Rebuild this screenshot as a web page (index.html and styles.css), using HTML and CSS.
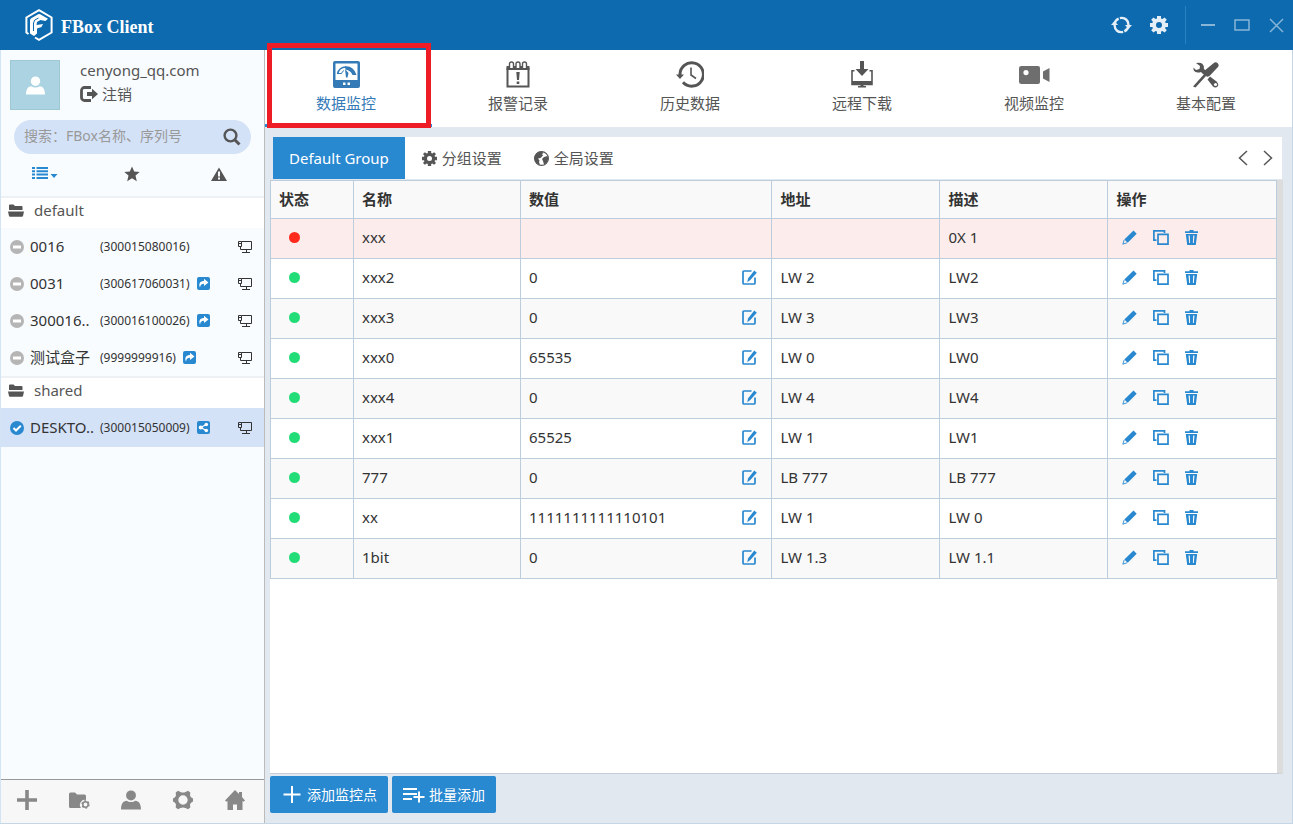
FILE: index.html
```
<!DOCTYPE html>
<html lang="zh">
<head>
    <meta charset="utf-8">
    <title>FBox Client</title>
    <link rel="stylesheet" href="styles.css">
</head>
<body>
    <svg class="sprite" aria-hidden="true">
        <symbol id="user" viewBox="0 0 20 20"><ellipse cx="10" cy="5.4" rx="4.9" ry="5"/><path d="M0 19.500c0-5.500 2.200-8.600 5.600-8.700 2.500 1.700 6.300 1.700 8.800 0 3.400.1 5.600 3.200 5.600 8.700z"/></symbol>
        <symbol id="logout" viewBox="0 0 18 16"><path d="M11 1.500H4.500a3 3 0 0 0-3 3v7a3 3 0 0 0 3 3H11" fill="none" stroke="currentColor" stroke-width="2.800"/><path d="M7 6h5V2.800L18 8l-6 5.200V10H7z"/></symbol>
        <symbol id="search" viewBox="0 0 18 18"><circle cx="7.500" cy="7.500" r="5.900" fill="none" stroke="currentColor" stroke-width="2.400"/><path d="M11.500 11.500l5 5" stroke="currentColor" stroke-width="3"/></symbol>
        <symbol id="list" viewBox="0 0 26 13"><path d="M0 0h3v2H0zM4.500 0H16v2H4.500zM0 3.300h3v2H0zM4.500 3.300H16v2H4.500zM0 6.600h3v2H0zM4.500 6.600H16v2H4.500zM0 9.900h3v2H0zM4.500 9.900H16v2H4.500zM18.500 7h7L22 11z"/></symbol>
        <symbol id="star" viewBox="0 0 16 16"><path d="M8 .5l2.200 5 5.500.5-4.200 3.600 1.300 5.600L8 12.300l-4.800 2.900 1.300-5.600L.3 6l5.500-.5z"/></symbol>
        <symbol id="warning" viewBox="0 0 16 14"><path fill-rule="evenodd" d="M8 .5L16 14H0zM7 4.500v5h2v-5zM7 10.500v2h2v-2z"/></symbol>
        <symbol id="folder-open" viewBox="0 0 16 13"><path d="M1 6V1.500Q1 .5 2 .5h3.500L7 2h6.500q1 0 1 1v3zM0 7.500h16l-1 4.500q-.2.800-1 .8H2q-.8 0-1-.8z"/></symbol>
        <symbol id="minus-circle" viewBox="0 0 14 14"><circle cx="7" cy="7" r="7"/><path d="M3 5.500h8v3H3z" fill="#fff"/></symbol>
        <symbol id="check-circle" viewBox="0 0 14 14"><circle cx="7" cy="7" r="7"/><path d="M3.500 7l2.500 2.500 4.800-4.800" stroke="#fff" stroke-width="2" fill="none"/></symbol>
        <symbol id="forward" viewBox="0 0 13 13"><rect width="13" height="13" rx="2"/><path d="M3 10.500C1 6 4 4 7 4V1.800L11.500 5.500 7 9V6.800C5 6.800 3.500 7.500 3 10.500z" fill="#fff"/></symbol>
        <symbol id="share" viewBox="0 0 13 13"><rect width="13" height="13" rx="2"/><g fill="#fff"><circle cx="3.700" cy="6.500" r="2"/><circle cx="9.300" cy="3.500" r="1.800"/><circle cx="9.300" cy="9.500" r="1.800"/></g><path d="M9.300 3.500L3.700 6.500l5.600 3" stroke="#fff" fill="none" stroke-width="1.200"/></symbol>
        <symbol id="monitor" viewBox="0 0 14 12"><path d="M3.500.5h10v8H3M.5.500h3v5h-3zM1 2.500h2M2.500 5.500v3h1M8.500 8.500v3M4 11.500h8" fill="none" stroke="currentColor"/></symbol>
        <symbol id="plus-bold" viewBox="0 0 20 20"><path d="M10 0v20M0 10h20" stroke="currentColor" stroke-width="3.600"/></symbol>
        <symbol id="folder-gear" viewBox="0 0 21 17"><path d="M0 2q0-1.500 1.500-1.500H6L8 2.500h7.500q1.500 0 1.500 1.500v4a5 5 0 0 0-5 8H1.500Q0 16 0 14.500z"/><circle cx="16.500" cy="12.500" r="2.700" fill="none" stroke="currentColor" stroke-width="1.500"/><circle cx="16.500" cy="12.500" r="3.600" fill="none" stroke="currentColor" stroke-width="1.200" stroke-dasharray="1.900"/></symbol>
        <symbol id="gear-ring" viewBox="0 0 20 20"><path fill-rule="evenodd" d="M5 .8L7.500 2Q10 3 12.500 2L15 .8l2.300 1.800-.3 3Q17.500 7.500 20 8.500v3q-2.500 1-3 2.900l.3 3-2.300 1.800-2.500-1.200q-2.500-1-5 0L5 19.200l-2.300-1.800.3-3Q2.500 12.500 0 11.500v-3Q2.500 7.500 3 5.600l-.3-3zM10 5.300a4.700 4.700 0 1 0 0 9.400 4.700 4.700 0 0 0 0-9.400z"/></symbol>
        <symbol id="home" viewBox="0 0 20 20"><path d="M10 0l4 4V2h3v5l3 3.500-1.500 1.200L17.500 11v9H12v-5.500H8V20H2.500v-9l-1 .7L0 10.500z"/></symbol>
        <symbol id="gauge" viewBox="0 0 27 27"><path fill-rule="evenodd" d="M2 0h23q2 0 2 2v23q0 2-2 2H2q-2 0-2-2V2Q0 0 2 0zM2.500 2.500V19h22V2.500zM10 21.500v2.500h2.500v-2.500zM14.500 21.500v2.500H17v-2.500z"/><path d="M4.500 13C5.500 8.500 9 6 13 6" fill="none" stroke="currentColor" stroke-width="1.500"/><path d="M4.500 12.500h4Q9 10.500 11 9.500" fill="none" stroke="currentColor"/><path d="M12 5.300q8.500-.8 11.500 8.700h-4Q18 9.500 12.500 8.500z"/><path d="M12 8l3.500 4-1 4.500H13z"/></symbol>
        <symbol id="alarm" viewBox="0 0 24 27"><path d="M1.500 7v18.500h21V7" fill="none" stroke="currentColor" stroke-width="2"/><path d="M.5 5h23v4H.5zM10.300 11h3.400l-.7 8h-2zM10.700 20.500h2.600V23h-2.600z"/><path d="M3.500 7V3q0-2 2-2t2 2v4M10 7V3q0-2 2-2t2 2v4M16.500 7V3q0-2 2-2t2 2v4" fill="#fff" stroke="currentColor" stroke-width="1.400"/></symbol>
        <symbol id="history" viewBox="0 0 28 27"><path d="M4 14A11.700 11.700 0 1 1 7 21.300" fill="none" stroke="currentColor" stroke-width="3"/><path d="M0 13.500h8L4 18z"/><path d="M15 6.500V14l5 3.500" fill="none" stroke="currentColor" stroke-width="1.600"/></symbol>
        <symbol id="download" viewBox="0 0 22 27"><path d="M3.500 9.800H1V23.500h20V9.800h-2.500" fill="none" stroke="currentColor" stroke-width="1.600"/><path d="M1 20h20v4H1zM9.500 24h3v1H15v1.500H7V25h2.500zM9 0h4v8h4.500L11 15 4.500 8H9z"/></symbol>
        <symbol id="camera" viewBox="0 0 31 18"><path fill-rule="evenodd" d="M2.500 0H19q2 0 2 2v14q0 2-2 2H2.500Q0 18 0 16V2Q0 0 2.500 0zM7 4a2.600 2.600 0 1 0 0 5.200A2.600 2.600 0 0 0 7 4zM30.500 2v14L24 12.500v-7z"/></symbol>
        <symbol id="tools" viewBox="0 0 26 26"><path d="M3 1l4 3-.5 3L3 8 .5 5.500Q0 10 4.500 10.500q2 .2 3.500-.5l2.500 2.500 3-3L11 7q.5-3-1.500-5T3 1z"/><path d="M24.700 1.200q2 2-.2 4.300l-7.500 8q-2 2-4 .5L2.500 25.500 0 24.500l11-12.300q-1-2 1-4l8.500-7q2.200-2 4.200 0z"/><path d="M17 14.500l6.500 5q3 3 1 5t-4.500 0l-5.500-7z"/><circle cx="22.500" cy="22.500" r="1.600" fill="#fff"/></symbol>
        <symbol id="cog" viewBox="0 0 18 18"><path fill-rule="evenodd" d="M7 0h4v2.500l1.500.6 2-1.700 2.300 2.300-1.700 2 .5 1.300H18v4h-2.400l-.5 1.300 1.700 2-2.300 2.300-2-1.700-1.500.6V18H7v-2.500l-1.500-.6-2 1.700-2.300-2.300 1.700-2L2.400 11H0V7h2.400l.5-1.300-1.700-2 2.300-2.300 2 1.700L7 2.500zM9 6a3 3 0 1 0 0 6 3 3 0 0 0 0-6z"/></symbol>
        <symbol id="globe" viewBox="0 0 15 15"><circle cx="7.500" cy="7.500" r="6.900" fill="none" stroke="currentColor" stroke-width="1.200"/><path d="M1 4.500Q3.500.2 8 .6L9.500 2 8 3l1 1.500L6.500 7 4 7.500l1.500 2L5 11l1 3Q1 12.500.6 8zM10 6l3.500-1 1 3-2 4-2.500 1.500-1-3.500L8 8z"/></symbol>
        <symbol id="refresh" viewBox="0 0 21 18"><path d="M3.500 8A7.300 7.300 0 0 1 16 4.200M17.500 10A7.300 7.300 0 0 1 5 13.800M15 3.300Q17.200 5 17.500 9M6 14.700Q3.800 13 3.500 9" fill="none" stroke="currentColor" stroke-width="2.400" stroke-dasharray="7 1.300"/><path d="M0 9h7L3.500 5zM14 9h7l-3.500 4z"/></symbol>
        <symbol id="edit" viewBox="0 0 15 15"><path d="M9.500 1H2Q1 1 1 2v11q0 1 1 1h10q1 0 1-1V7.500" fill="none" stroke="currentColor" stroke-width="1.700"/><path d="M12.300.5l2.500 2.200L8.300 10l-3.100 2.200 1-4z"/></symbol>
        <symbol id="pencil" viewBox="0 0 15 15"><path d="M11.500.5l3.200 3.200-9 9L2.300 9.500z"/><path d="M2.200 10L.8 14.200 5 12.800" fill="none" stroke="currentColor" stroke-width=".9"/></symbol>
        <symbol id="copy" viewBox="0 0 16 15"><path d="M3.500 10.200H.9V.9h10.600v2M5 4.400h10v9.700H5z" fill="none" stroke="currentColor" stroke-width="1.700"/></symbol>
        <symbol id="trash" viewBox="0 0 13 15"><path fill-rule="evenodd" d="M4.500 0h4v1.200H13V3H0V1.200h4.500zM.8 4h11.400l-1.400 11H2.200zM3.500 5.500l.7 7.500h.9L4.800 5.500zM8.200 5.500L7.900 13h.9l.7-7.500z"/></symbol>
        <symbol id="plus" viewBox="0 0 17 17"><path d="M8.500 0v17M0 8.500h17" stroke="currentColor" stroke-width="2"/></symbol>
        <symbol id="list-plus" viewBox="0 0 22 16"><path d="M0 2h14M0 7h14M0 12h9M16 4.500v11M10.500 10H21.500" stroke="currentColor" stroke-width="2"/></symbol>
    </svg>

    <header class="titlebar">
        <svg class="logo" viewBox="0 0 28 32"><path d="M3.500 25L1.400 23.500v-15L14 1.200l12.600 7.300v15L14 30.800l-4-2.300" fill="none" stroke="#fff" stroke-width="2"/><path d="M5 24.500v-13q0-1.500 1.200-2.200l7-4q1-.5 2 0L23 9.700 20.500 12l-5-1-3.500 2-.5 3 6.500-1-1.500 3-4.500 1.500v5L9 27z" fill="#fff"/><path d="M8.500 22v-8q0-3.500 5-5" fill="none" stroke="#0d6aaf"/></svg>
        <span class="brand">FBox Client</span>
        <div class="window-tools">
            <button class="tool" aria-label="刷新"><svg width="21" height="18"><use href="#refresh"/></svg></button>
            <button class="tool" aria-label="设置"><svg width="18" height="18"><use href="#cog"/></svg></button>
        </div>
        <div class="window-buttons">
            <button aria-label="最小化"><svg width="16" height="16"><path d="M1 8h14" stroke="currentColor" stroke-width="2"/></svg></button>
            <button aria-label="最大化"><svg width="16" height="16"><rect x="1" y="3" width="14" height="10" fill="none" stroke="currentColor" stroke-width="1.500"/></svg></button>
            <button aria-label="关闭"><svg width="16" height="16"><path d="M2 2l13 13M15 2L2 15" stroke="currentColor" stroke-width="1.500"/></svg></button>
        </div>
    </header>

    <div class="layout">
        <aside class="sidebar">
            <div class="profile">
                <div class="avatar"><svg width="19" height="21"><use href="#user"/></svg></div>
                <div class="account">
                    <span>cenyong_qq.com</span>
                    <a href="#"><svg width="18" height="16"><use href="#logout"/></svg>注销</a>
                </div>
            </div>
            <form class="search">
                <input type="text" aria-label="搜索" placeholder="搜索：FBox名称、序列号">
                <button type="button" aria-label="搜索"><svg width="18" height="18"><use href="#search"/></svg></button>
            </form>
            <div class="filters">
                <button class="active" aria-label="列表"><svg width="26" height="13"><use href="#list"/></svg></button>
                <button aria-label="收藏"><svg width="16" height="16"><use href="#star"/></svg></button>
                <button aria-label="报警"><svg width="16" height="14"><use href="#warning"/></svg></button>
            </div>

            <div class="boxes">
                <h2 class="group"><svg width="16" height="13"><use href="#folder-open"/></svg>default</h2>
                <ul>
                    <li><svg class="state" width="14" height="14"><use href="#minus-circle"/></svg><span class="name">0016</span><span class="serial">(300015080016)</span><svg class="screen" width="14" height="12"><use href="#monitor"/></svg></li>
                    <li><svg class="state" width="14" height="14"><use href="#minus-circle"/></svg><span class="name">0031</span><span class="serial">(300617060031)</span><svg class="link" width="13" height="13"><use href="#forward"/></svg><svg class="screen" width="14" height="12"><use href="#monitor"/></svg></li>
                    <li><svg class="state" width="14" height="14"><use href="#minus-circle"/></svg><span class="name">300016..</span><span class="serial">(300016100026)</span><svg class="link" width="13" height="13"><use href="#forward"/></svg><svg class="screen" width="14" height="12"><use href="#monitor"/></svg></li>
                    <li><svg class="state" width="14" height="14"><use href="#minus-circle"/></svg><span class="name">测试盒子</span><span class="serial">(9999999916)</span><svg class="link" width="13" height="13"><use href="#forward"/></svg><svg class="screen" width="14" height="12"><use href="#monitor"/></svg></li>
                </ul>
                <h2 class="group"><svg width="16" height="13"><use href="#folder-open"/></svg>shared</h2>
                <ul>
                    <li class="selected"><svg class="state" width="14" height="14"><use href="#check-circle"/></svg><span class="name">DESKTO..</span><span class="serial">(300015050009)</span><svg class="link" width="13" height="13"><use href="#share"/></svg><svg class="screen" width="14" height="12"><use href="#monitor"/></svg></li>
                </ul>
            </div>

            <div class="side-footer">
                <button aria-label="添加"><svg width="20" height="20"><use href="#plus-bold"/></svg></button>
                <button aria-label="分组管理"><svg width="21" height="17"><use href="#folder-gear"/></svg></button>
                <button aria-label="用户"><svg width="20" height="20"><use href="#user"/></svg></button>
                <button aria-label="设置"><svg width="20" height="20"><use href="#gear-ring"/></svg></button>
                <button aria-label="主页"><svg width="20" height="20"><use href="#home"/></svg></button>
            </div>
        </aside>

        <main>
            <nav class="nav">
                <a class="active" href="#"><svg width="27" height="27"><use href="#gauge"/></svg>数据监控</a>
                <a href="#"><svg width="24" height="27"><use href="#alarm"/></svg>报警记录</a>
                <a href="#"><svg width="28" height="27"><use href="#history"/></svg>历史数据</a>
                <a href="#"><svg width="22" height="27"><use href="#download"/></svg>远程下载</a>
                <a href="#"><svg width="31" height="18"><use href="#camera"/></svg>视频监控</a>
                <a href="#"><svg width="26" height="26"><use href="#tools"/></svg>基本配置</a>
            </nav>

            <section class="content">
                <div class="tabs">
                    <button class="tab active">Default Group</button>
                    <button class="tab"><svg width="15" height="15"><use href="#cog"/></svg>分组设置</button>
                    <button class="tab"><svg width="15" height="15"><use href="#globe"/></svg>全局设置</button>
                    <div class="pager">
                        <button aria-label="上一页"><svg width="10" height="16"><path d="M9 1L1.500 8 9 15" fill="none" stroke="currentColor" stroke-width="1.500"/></svg></button>
                        <button aria-label="下一页"><svg width="10" height="16"><path d="M1 1l7.500 7L1 15" fill="none" stroke="currentColor" stroke-width="1.500"/></svg></button>
                    </div>
                </div>
                <div class="grid">
                    <table>
                        <thead>
                            <tr>
                                <th class="col-state">状态</th>
                                <th class="col-name">名称</th>
                                <th class="col-value">数值</th>
                                <th class="col-address">地址</th>
                                <th class="col-note">描述</th>
                                <th>操作</th>
                            </tr>
                        </thead>
                        <tbody id="points"></tbody>
                    </table>
                </div>
                <div class="actions">
                    <button><svg width="22" height="17"><use href="#plus"/></svg>添加监控点</button>
                    <button><svg width="22" height="16"><use href="#list-plus"/></svg>批量添加</button>
                </div>
            </section>
        </main>
    </div>

    <script>
        const points = [
            { name: "xxx", value: "", address: "", note: "0X 1", error: true },
            { name: "xxx2", value: "0", address: "LW 2", note: "LW2" },
            { name: "xxx3", value: "0", address: "LW 3", note: "LW3" },
            { name: "xxx0", value: "65535", address: "LW 0", note: "LW0" },
            { name: "xxx4", value: "0", address: "LW 4", note: "LW4" },
            { name: "xxx1", value: "65525", address: "LW 1", note: "LW1" },
            { name: "777", value: "0", address: "LB 777", note: "LB 777" },
            { name: "xx", value: "1111111111110101", address: "LW 1", note: "LW 0" },
            { name: "1bit", value: "0", address: "LW 1.3", note: "LW 1.1" }
        ];

        function iconButton(icon, label, width) {
            return `<button class="icon" aria-label="${label}"><svg width="${width}" height="15"><use href="#${icon}"/></svg></button>`;
        }

        document.getElementById("points").innerHTML = points.map(p => `
            <tr class="${p.error ? "error" : ""}">
                <td><span class="dot"></span></td>
                <td>${p.name}</td>
                <td><div class="value">${p.value}${p.error ? "" : iconButton("edit", "写入", 15)}</div></td>
                <td>${p.address}</td>
                <td>${p.note}</td>
                <td><div class="ops">${iconButton("pencil", "编辑", 15)}${iconButton("copy", "复制", 16)}${iconButton("trash", "删除", 13)}</div></td>
            </tr>`).join("");
    </script>
</body>
</html>
```
FILE: styles.css
```
* {
    box-sizing: border-box;
}

body {
    display: flex;
    flex-direction: column;
    height: 100vh;
    margin: 0;
    font-family: "Noto Sans", "Noto Sans CJK SC", sans-serif;
    font-size: 15px;
    line-height: 24px;
    color: #333;
    background-color: #e1e8ef;
}

button {
    display: flex;
    align-items: center;
    justify-content: center;
    padding: 0;
    border: none;
    background: none;
    color: inherit;
    font: inherit;
    cursor: pointer;
}

a {
    color: inherit;
    text-decoration: none;
}

svg {
    display: block;
    flex: none;
    fill: currentColor;
}

.sprite {
    position: absolute;
    width: 0;
    height: 0;
}

/* title bar */
.titlebar {
    display: flex;
    flex: none;
    align-items: center;
    height: 50px;
    padding-left: 25px;
    background-color: #0d6aaf;
    color: #fff;
}

.logo {
    width: 28px;
    height: 32px;
}

.brand {
    margin-left: 8px;
    padding-top: 3px;
    font-family: "Liberation Serif", serif;
    font-size: 18px;
    font-weight: bold;
}

.window-tools {
    display: flex;
    gap: 18px;
    margin-left: auto;
    padding-right: 17px;
    color: #e4eef6;
}

.window-buttons {
    display: flex;
    align-items: center;
    gap: 18px;
    height: 38px;
    padding: 0 9px 0 14px;
    border-left: 1px solid #2a82c2;
    color: #86b5d8;
}

.layout {
    display: flex;
    flex: 1;
    min-height: 0;
    border-right: 1px solid #c5d7e6;
    border-bottom: 1px solid #c5d7e6;
}

/* sidebar */
.sidebar {
    position: relative;
    z-index: 1;
    display: flex;
    flex: none;
    flex-direction: column;
    width: 265px;
    border-left: 1px solid #d3e5f5;
    border-right: 1px solid #bbb;
    background-color: #f8fcff;
    color: #555;
}

.profile {
    display: flex;
    gap: 20px;
    height: 70px;
    padding: 8px 9px;
}

.avatar {
    display: flex;
    align-items: center;
    justify-content: center;
    width: 50px;
    height: 50px;
    margin-top: 2px;
    border: 1px solid #9fc8d5;
    background-color: #abd3e1;
    color: #fff;
}

.account a {
    display: flex;
    align-items: center;
    gap: 4px;
}

.search {
    display: flex;
    align-items: center;
    height: 34px;
    margin: 0 13px;
    padding: 0 10px;
    border-radius: 17px;
    background-color: #d4e2f8;
}

.search input {
    flex: 1;
    min-width: 0;
    padding: 0 0 2px;
    border: none;
    outline: none;
    background: none;
    font: inherit;
    font-size: 14px;
}

.search input::placeholder {
    color: #999;
}

.filters {
    display: flex;
    height: 42px;
    padding: 0 2px 3px 0;
}

.filters button {
    flex: 1;
}

.filters .active {
    color: #2888d0;
}

.boxes {
    flex: 1;
}

.group {
    display: flex;
    align-items: center;
    gap: 10px;
    height: 32px;
    margin: 0;
    padding: 0 7px 6px;
    border-top: 2px solid #edf1f4;
    background-color: #fff;
    font-size: 15px;
    font-weight: normal;
}

.boxes ul {
    margin: 0;
    padding: 0;
    list-style: none;
}

.boxes li {
    display: flex;
    align-items: center;
    height: 37px;
    padding: 0 12px 0 9px;
    color: #333;
}

.boxes li.selected {
    height: 39px;
    background-color: #d4e2f8;
}

.state {
    color: #b5b5b5;
}

.selected .state,
.link {
    color: #2888d0;
}

.name {
    width: 76px;
    padding: 0 0 2px 6px;
    white-space: nowrap;
}

.serial {
    margin-right: 7px;
    font-size: 12px;
}

.screen {
    margin-left: auto;
}

.side-footer {
    display: flex;
    height: 44px;
    padding: 0 3px 3px 0;
    border-top: 1px solid #999;
    background-color: #f7f7f7;
    color: #888;
}

.side-footer button {
    flex: 1;
}

/* main area */
main {
    display: flex;
    flex: 1;
    flex-direction: column;
    min-width: 0;
}

.nav {
    display: flex;
    height: 77px;
    margin-left: -5px;
    background-color: #fff;
    color: #555;
}

.nav a {
    position: relative;
    display: flex;
    flex: 1;
    flex-direction: column;
    align-items: center;
    justify-content: flex-end;
    padding-bottom: 12px;
}

.nav svg {
    margin: auto;
    margin-bottom: 3px;
}

.nav a:nth-child(5) svg {
    margin-bottom: 7px;
    color: #6e6e6e;
}

.nav .active {
    color: #337ab7;
    border-bottom: 3px solid #2888d0;
    padding-bottom: 9px;
}

.nav .active::after {
    content: "";
    position: absolute;
    top: -7px;
    right: 1px;
    bottom: -4px;
    left: 7px;
    border: 5px solid #ee1c24;
}

.content {
    display: flex;
    flex: 1;
    flex-direction: column;
    min-height: 0;
    padding: 10px 9px 10px 5px;
}

.tabs {
    display: flex;
    height: 42px;
    margin: 0 1px 0 3px;
    background-color: #fff;
    color: #555;
}

.tab {
    gap: 5px;
    margin-left: 17px;
    padding-right: 15px;
}

.tab.active {
    margin-left: 0;
    padding: 0 16px;
    background-color: #2888d0;
    color: #fff;
}

.pager {
    display: flex;
    gap: 15px;
    margin-left: auto;
    padding-right: 9px;
}

.grid {
    flex: 1;
    min-height: 0;
    margin-top: 1px;
    overflow: hidden;
    border-right: 6px solid #dcdcdc;
    border-bottom: 1px solid #c3ccd8;
    background-color: #fff;
}

table {
    width: 100%;
    table-layout: fixed;
    border-collapse: collapse;
}

th,
td {
    height: 40px;
    padding: 0 8px 3px;
    border: 1px solid #bccddd;
    text-align: left;
}

th {
    height: 38px;
    padding-bottom: 2px;
    background-color: #f9f9f9;
}

.col-state {
    width: 83px;
}

.col-name {
    width: 16.6%;
}

.col-address,
.col-note {
    width: 16.7%;
}

.col-value {
    width: 25%;
}

tbody tr:nth-child(odd) {
    background-color: #f9f9f9;
}

tbody tr.error {
    background-color: #fcedec;
}

.dot {
    display: block;
    width: 11px;
    height: 11px;
    margin-left: 10px;
    border-radius: 50%;
    background-color: #22dd77;
}

.error .dot {
    background-color: #ff2a1c;
}

.value {
    display: flex;
    justify-content: space-between;
    padding-right: 6px;
}

.ops {
    display: flex;
    gap: 16px;
    padding-left: 6px;
}

.icon {
    height: 24px;
    color: #2888d0;
}

.actions {
    display: flex;
    gap: 4px;
    margin-top: 2px;
}

.actions button {
    gap: 4px;
    height: 37px;
    padding: 0 11px;
    border-radius: 2px;
    background-color: #2888d0;
    color: #fff;
    font-size: 14px;
}
```
